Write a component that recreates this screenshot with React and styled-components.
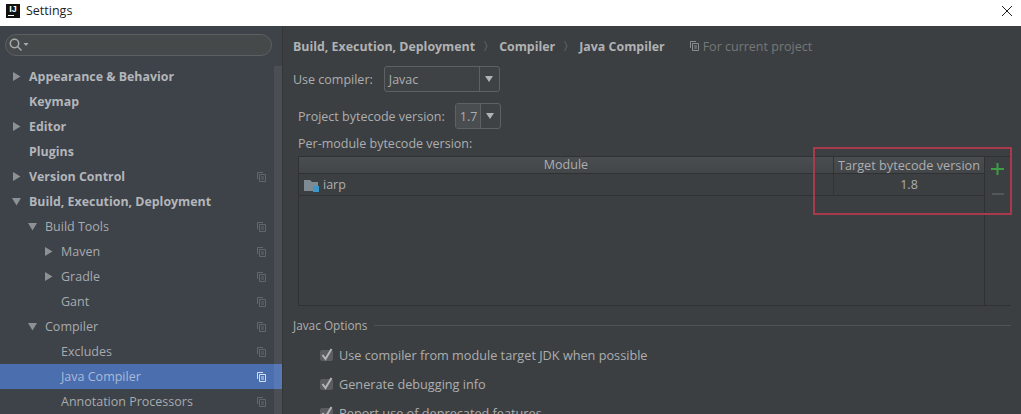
import styled, { createGlobalStyle } from 'styled-components'

const GlobalStyle = createGlobalStyle`
  html, body {
    margin: 0;
    padding: 0;
    background: #3c3f41;
  }
  * {
    box-sizing: border-box;
  }
`

const Window = styled.div`
  width: 1021px;
  height: 414px;
  overflow: hidden;
  display: flex;
  flex-direction: column;
  font-family: "Open Sans", "Noto Sans", sans-serif;
  font-size: 12.5px;
  color: #bbbbbb;
`
const TitleBar = styled.header`
  flex: none;
  height: 26px;
  background: #fff;
  color: #222;
  display: flex;
  align-items: center;
  padding: 0 7px 5px 6px;
  gap: 6px;
`
const AppLogo = styled.div`
  width: 14px;
  height: 14px;
  background: #111;
  color: #fff;
  font: bold 9px/10px "Liberation Sans", sans-serif;
  text-align: center;
  position: relative;
  &::after {
    content: '';
    position: absolute;
    left: 2px;
    bottom: 2px;
    width: 6px;
    height: 1px;
    background: #fff;
  }
`
const CloseButton = styled.svg`
  margin-left: auto;
  margin-right: 1px;
`
const Body = styled.div`
  flex: 1;
  display: flex;
  min-height: 0;
`
const Sidebar = styled.aside`
  flex: none;
  width: 283px;
  background: #3e4249;
  position: relative;
  padding-top: 8px;
  border-right: 1px solid #333537;
`
const SearchBox = styled.div`
  margin-left: 5px;
  width: 267px;
  height: 22px;
  border-radius: 11px;
  border: 1px solid #5c6063;
  background: #45494a;
  display: flex;
  align-items: center;
  padding-left: 3px;
`
const Tree = styled.ul`
  list-style: none;
  margin: 8px 0 0;
  padding: 0;
`
const Row = styled.li`
  height: 25px;
  display: flex;
  align-items: center;
  padding-left: ${p => 12 + p.$level * 16}px;
  padding-right: 16px;
  background: ${p => (p.$selected ? '#4b6eaf' : 'transparent')};
  font-weight: ${p => (p.$bold ? 700 : 400)};
  font-size: ${p => (p.$bold ? '12.4px' : '12.5px')};
  color: ${p => (p.$selected ? '#a9bbd8' : p.$bold ? '#b3b6ba' : '#a8abae')};
`
const Arrow = styled.span`
  flex: none;
  width: 17px;
  height: 12px;
  display: flex;
  align-items: center;
`
const RowLabel = styled.span`
  flex: 1;
  white-space: nowrap;
`
const Scrollbar = styled.div`
  position: absolute;
  top: 40px;
  bottom: 0;
  right: 0;
  width: 8px;
  background: rgba(255, 255, 255, 0.07);
`
const Main = styled.main`
  flex: 1;
  min-width: 0;
  position: relative;
  background: #3c3f41;
  padding: 11px 10px 0 10px;
  color: #acaeb0;
`
const Breadcrumbs = styled.div`
  display: flex;
  align-items: center;
  height: 18px;
  font-size: 12.4px;
  font-weight: 700;
  color: #b0b2b4;
`
const Sep = styled.span`
  margin: 0 5px 0 8px;
  font-weight: 400;
  font-size: 11px;
  color: #8c8f91;
`
const ProjectHint = styled.span`
  display: flex;
  align-items: center;
  gap: 4px;
  margin-left: 25px;
  font-size: 12.5px;
  font-weight: 400;
  color: #74787a;
`
const FormRow = styled.div`
  display: flex;
  align-items: center;
  gap: ${p => p.$gap}px;
  height: 26px;
  margin-top: ${p => p.$top}px;
  padding-left: ${p => p.$indent || 0}px;
`
const Select = styled.div`
  width: ${p => p.$width}px;
  height: 26px;
  display: flex;
  border: 1px solid #5d6163;
  border-radius: 3px;
  background: #3f4244;
`
const SelectValue = styled.div`
  flex: 1;
  display: flex;
  align-items: center;
  padding-left: ${p => p.$pad}px;
  background: ${p => (p.$filled ? '#4a4d4f' : 'transparent')};
`
const SelectButton = styled.div`
  flex: none;
  width: ${p => p.$width}px;
  border-left: 1px solid #5d6163;
  display: flex;
  align-items: center;
  justify-content: center;
`
const Caret = styled.span`
  width: 0;
  height: 0;
  border-left: 4px solid transparent;
  border-right: 4px solid transparent;
  border-top: 6px solid #b0b3b6;
`
const SubLabel = styled.div`
  height: 18px;
  margin-top: 5px;
  padding-left: 5px;
  display: flex;
  align-items: center;
`
const TableArea = styled.div`
  display: flex;
  margin: 4px 0 0 5px;
  height: 150px;
  width: 713px;
  border: 1px solid #2f3132;
  border-right: none;
`
const Table = styled.div`
  flex: 1;
  min-width: 0;
  border-right: 1px solid #2f3132;
`
const TableHead = styled.div`
  display: grid;
  grid-template-columns: 534px 1fr;
  height: 17px;
  background: linear-gradient(#4a4d4f, #434648);
  border-bottom: 1px solid #2f3132;
  text-align: center;
  line-height: 16px;
`
const HeadCell = styled.div`
  white-space: nowrap;
  & + & {
    border-left: 1px solid #313335;
    font-size: 12.7px;
  }
`
const TableRow = styled.div`
  display: grid;
  grid-template-columns: 534px 1fr;
  height: 22px;
  border-bottom: 1px solid #2f3132;
  line-height: 21px;
`
const ModuleCell = styled.div`
  display: flex;
  align-items: center;
  gap: 3px;
  padding-left: 5px;
`
const VersionCell = styled.div`
  text-align: center;
  border-left: 1px solid #313335;
`
const TableTools = styled.div`
  flex: none;
  width: 26px;
  display: flex;
  flex-direction: column;
  align-items: center;
  padding: 6px 1px 0 0;
  gap: 18px;
`
const SectionTitle = styled.div`
  display: flex;
  align-items: center;
  gap: 7px;
  margin-top: 10px;
  height: 18px;
  font-size: 11.8px;
  &::after {
    content: '';
    flex: 1;
    height: 1px;
    background: #505355;
  }
`
const Options = styled.div`
  display: flex;
  flex-direction: column;
  gap: 10px;
  margin-top: 11px;
  padding-left: 27px;
`
const Option = styled.label`
  display: flex;
  align-items: center;
  gap: 6px;
  height: 19px;
  white-space: nowrap;
  font-size: 12.7px;
`
const Checkbox = styled.span`
  flex: none;
  width: 13px;
  height: 11px;
  margin-top: 1px;
  border-radius: 2px;
  background: #5a5d5f;
  display: flex;
  align-items: center;
  justify-content: center;
  & > svg {
    overflow: visible;
  }
`
const Annotation = styled.div`
  position: absolute;
  left: 530px;
  top: 121px;
  width: 199px;
  height: 68px;
  border: 2px solid #a83a4c;
  pointer-events: none;
`

const CopyIcon = ({ color = '#63676b' }) => (
  <svg width="9" height="10" viewBox="0 0 9 10" fill="none" stroke={color}>
    <path d="M.5 7V.5H6" />
    <path d="M2.5 2.5h6v7h-6z" />
    <path d="M4 5h3M4 7h3" />
  </svg>
)

const TreeArrow = ({ open }) => (
  <svg width="9" height="9" viewBox="0 0 9 9" fill="#8e9194">
    <path d={open ? 'M0 1h9L4.5 8.5z' : 'M1 0l7.5 4.5L1 9z'} />
  </svg>
)

const rows = [
  { label: 'Appearance & Behavior', level: 0, bold: true, arrow: 'closed' },
  { label: 'Keymap', level: 0, bold: true },
  { label: 'Editor', level: 0, bold: true, arrow: 'closed' },
  { label: 'Plugins', level: 0, bold: true },
  { label: 'Version Control', level: 0, bold: true, arrow: 'closed', copy: true },
  { label: 'Build, Execution, Deployment', level: 0, bold: true, arrow: 'open' },
  { label: 'Build Tools', level: 1, arrow: 'open', copy: true },
  { label: 'Maven', level: 2, arrow: 'closed', copy: true },
  { label: 'Gradle', level: 2, arrow: 'closed', copy: true },
  { label: 'Gant', level: 2, copy: true },
  { label: 'Compiler', level: 1, arrow: 'open', copy: true },
  { label: 'Excludes', level: 2, copy: true },
  { label: 'Java Compiler', level: 2, copy: true, selected: true },
  { label: 'Annotation Processors', level: 2, copy: true },
]

const options = [
  'Use compiler from module target JDK when possible',
  'Generate debugging info',
  'Report use of deprecated features',
]

export default function App() {
  return (
    <Window>
      <GlobalStyle />
      <TitleBar>
        <AppLogo>IJ</AppLogo>
        Settings
        <CloseButton width="12" height="12" viewBox="0 0 12 12" stroke="#222" fill="none">
          <path d="M1 1l10 10M11 1L1 11" />
        </CloseButton>
      </TitleBar>
      <Body>
        <Sidebar>
          <SearchBox>
            <svg width="20" height="14" viewBox="0 0 20 14" fill="none" stroke="#a9acaf" strokeWidth="1.5">
              <circle cx="5.5" cy="5.5" r="4.2" />
              <path d="M8.5 8.5l4 4" />
              <path d="M14.5 5h5l-2.5 3z" fill="#a9acaf" stroke="none" />
            </svg>
          </SearchBox>
          <Tree>
            {rows.map(r => (
              <Row key={r.label} $level={r.level} $bold={r.bold} $selected={r.selected}>
                <Arrow>{r.arrow && <TreeArrow open={r.arrow === 'open'} />}</Arrow>
                <RowLabel>{r.label}</RowLabel>
                {r.copy && <CopyIcon color={r.selected ? '#d5deee' : '#63676b'} />}
              </Row>
            ))}
          </Tree>
          <Scrollbar />
        </Sidebar>
        <Main>
          <Breadcrumbs>
            Build, Execution, Deployment
            <Sep>〉</Sep>
            Compiler
            <Sep>〉</Sep>
            Java Compiler
            <ProjectHint>
              <CopyIcon color="#8a8e91" />
              For current project
            </ProjectHint>
          </Breadcrumbs>
          <FormRow $top={11} $gap={11}>
            Use compiler:
            <Select $width={116}>
              <SelectValue $pad={4}>Javac</SelectValue>
              <SelectButton $width={20}><Caret /></SelectButton>
            </Select>
          </FormRow>
          <FormRow $top={11} $indent={5} $gap={10}>
            Project bytecode version:
            <Select $width={46}>
              <SelectValue $pad={4} $filled>1.7</SelectValue>
              <SelectButton $width={20}><Caret /></SelectButton>
            </Select>
          </FormRow>
          <SubLabel>Per-module bytecode version:</SubLabel>
          <TableArea>
            <Table>
              <TableHead>
                <HeadCell>Module</HeadCell>
                <HeadCell>Target bytecode version</HeadCell>
              </TableHead>
              <TableRow>
                <ModuleCell>
                  <svg width="16" height="14" viewBox="0 0 16 14">
                    <path d="M0 2h6l2 2h6v9H0z" fill="#7f8b93" />
                    <path d="M9 8h6v6H9z" fill="#3d97c9" />
                  </svg>
                  iarp
                </ModuleCell>
                <VersionCell>1.8</VersionCell>
              </TableRow>
            </Table>
            <TableTools>
              <svg width="13" height="12" viewBox="0 0 13 12" stroke="#3f9b45" strokeWidth="2">
                <path d="M6.5 0v12M0 6h13" />
              </svg>
              <svg width="12" height="2" viewBox="0 0 12 2" stroke="#53575a" strokeWidth="2">
                <path d="M0 1h12" />
              </svg>
            </TableTools>
          </TableArea>
          <SectionTitle>Javac Options</SectionTitle>
          <Options>
            {options.map(o => (
              <Option key={o}>
                <Checkbox>
                  <svg width="13" height="11" viewBox="0 0 13 11" fill="none" stroke="#b4b5b6" strokeWidth="2">
                    <path d="M2.5 5l3 4 6-10" />
                  </svg>
                </Checkbox>
                {o}
              </Option>
            ))}
          </Options>
          <Annotation />
        </Main>
      </Body>
    </Window>
  )
}
